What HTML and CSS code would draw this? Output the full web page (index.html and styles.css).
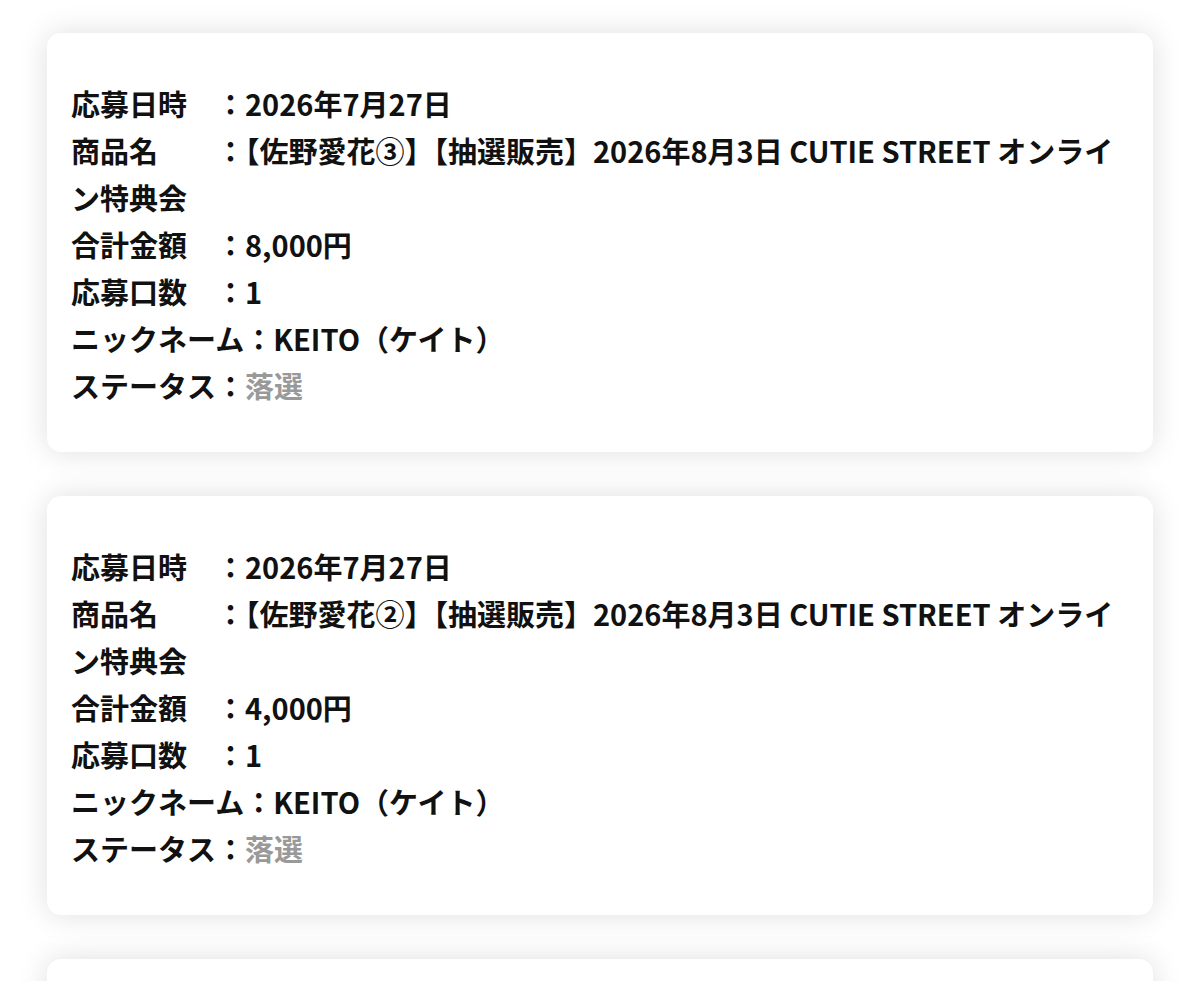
FILE: index.html
```html
<!DOCTYPE html>
<html lang="ja">
<head>
  <meta charset="UTF-8" />
  <meta name="viewport" content="width=device-width, initial-scale=1.0" />
  <title>応募履歴</title>
  <link rel="stylesheet" href="styles.css">
</head>
<body>
  <div class="history-list">
    <div class="entry-card">
      <div class="entry-row">応募日時　：2026年7月27日</div>
      <div class="entry-row">商品名　　：【佐野愛花③】【抽選販売】2026年8月3日 CUTIE STREET オンライン特典会</div>
      <div class="entry-row">合計金額　：8,000円</div>
      <div class="entry-row">応募口数　：1</div>
      <div class="entry-row">ニックネーム：KEITO（ケイト）</div>
      <div class="entry-row">ステータス：<span class="status-lost">落選</span></div>
    </div>

    <div class="entry-card">
      <div class="entry-row">応募日時　：2026年7月27日</div>
      <div class="entry-row">商品名　　：【佐野愛花②】【抽選販売】2026年8月3日 CUTIE STREET オンライン特典会</div>
      <div class="entry-row">合計金額　：4,000円</div>
      <div class="entry-row">応募口数　：1</div>
      <div class="entry-row">ニックネーム：KEITO（ケイト）</div>
      <div class="entry-row">ステータス：<span class="status-lost">落選</span></div>
    </div>

    <div class="entry-card">
      <div class="entry-row">応募日時　：2026年7月27日</div>
      <div class="entry-row">商品名　　：【佐野愛花①】【抽選販売】2026年8月3日 CUTIE STREET オンライン特典会</div>
      <div class="entry-row">合計金額　：4,000円</div>
      <div class="entry-row">応募口数　：1</div>
      <div class="entry-row">ニックネーム：KEITO（ケイト）</div>
      <div class="entry-row">ステータス：<span class="status-lost">落選</span></div>
    </div>
  </div>
</body>
</html>
```

FILE: styles.css
```css
body {
  margin: 0;
  background: #fff;
  color: #111;
  font-family: "Noto Sans CJK JP", "Noto Sans", sans-serif;
  font-weight: bold;
}

.history-list {
  display: flex;
  flex-direction: column;
  gap: 44px;
  padding: 33px 47px;
}

.entry-card {
  background: #fff;
  border-radius: 14px;
  box-shadow: 0 0 30px rgba(0,0,0,0.13);
  padding: 47px 24px 43px;
  font-size: 29px;
  line-height: 47px;
}

.entry-row {
  word-break: break-all;
}

.status-lost {
  color: #999;
}
```
